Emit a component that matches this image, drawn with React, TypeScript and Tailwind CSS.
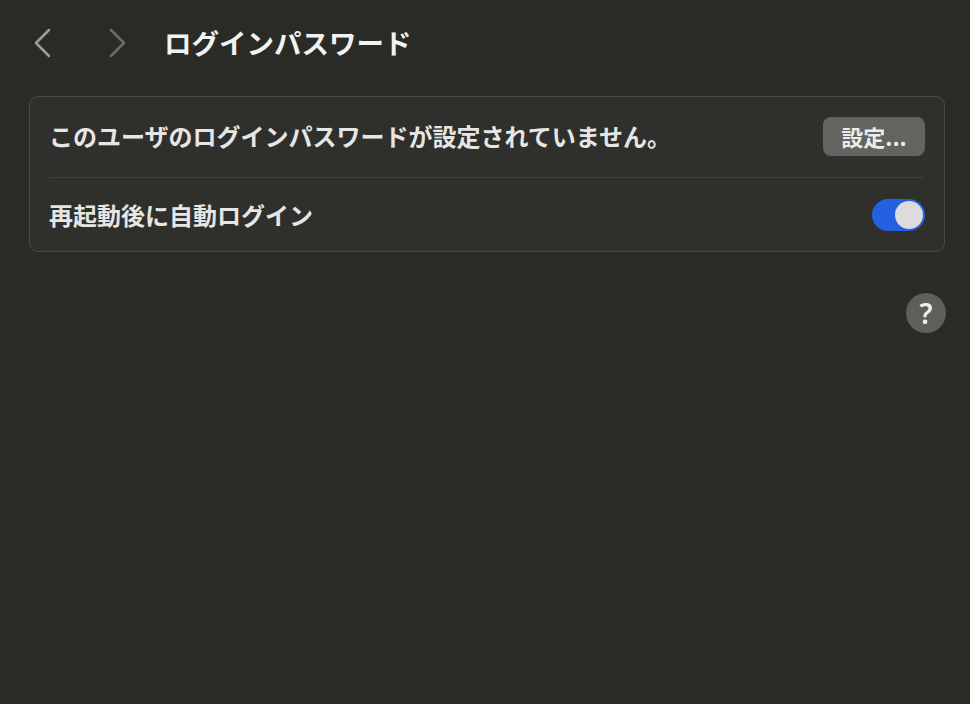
import React from "react";

export default function App() {
  const font = { fontFamily: '"Noto Sans CJK JP", "Noto Sans", sans-serif' };
  return (
    <div className="w-[970px] h-[704px] bg-[#2a2a27] text-[#e6e6e4] overflow-hidden" style={font}>
      <div className="flex items-center h-[85px] pl-[32px]">
        <svg width="22" height="32" viewBox="0 0 22 32" className="mr-[52px]">
          <path d="M17 3 L4 16 L17 29" stroke="#9a9a97" strokeWidth="2.6" fill="none" strokeLinecap="round" strokeLinejoin="round" />
        </svg>
        <svg width="22" height="32" viewBox="0 0 22 32" className="mr-[36px]">
          <path d="M5 3 L18 16 L5 29" stroke="#6a6a67" strokeWidth="2.6" fill="none" strokeLinecap="round" strokeLinejoin="round" />
        </svg>
        <div className="text-[27.5px] font-bold text-[#f2f2f0] leading-none">ログインパスワード</div>
      </div>
      <div className="ml-[29px] mr-[25px] mt-[11px] rounded-[9px] border border-[#4a4a47] bg-[#2f2f2c] px-[19px]">
        <div className="flex items-center justify-between h-[81px] border-b border-[#3f3f3c] pb-[2px]">
          <div className="text-[24px] font-bold leading-none">このユーザのログインパスワードが設定されていません。</div>
          <div className="w-[102px] h-[39px] rounded-[8px] bg-[#636360] flex items-center justify-center text-[22px] font-semibold text-[#ececea] leading-none">設定...</div>
        </div>
        <div className="flex items-center justify-between h-[73px]">
          <div className="text-[24px] font-bold leading-none">再起動後に自動ログイン</div>
          <div className="w-[53px] h-[32px] rounded-full bg-[#2560e0] flex items-center justify-end pr-[2px]">
            <div className="w-[28px] h-[28px] rounded-full bg-[#dcdcdc]" />
          </div>
        </div>
      </div>
      <div className="flex justify-end mr-[24px] mt-[41px]">
        <div className="w-[40px] h-[40px] rounded-full bg-[#5e5e5b] flex items-center justify-center text-[28px] font-semibold text-[#eeeeec] leading-none" style={{ fontFamily: '"Noto Sans", sans-serif' }}>?</div>
      </div>
    </div>
  );
}
